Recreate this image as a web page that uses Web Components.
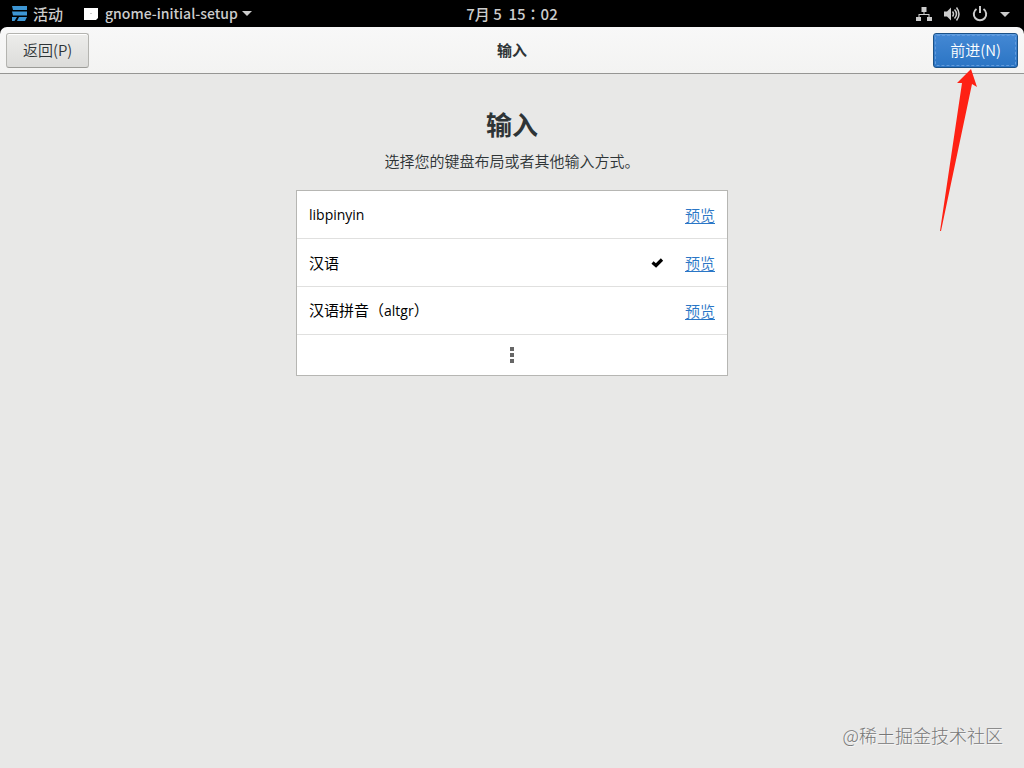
<!DOCTYPE html>
<html lang="zh-CN">
<head>
<meta charset="utf-8">
<title>输入</title>
<style>
  html, body { height: 100%; margin: 0; }
  body {
    background: #000;
    font: 15px/22px "Noto Sans CJK SC", sans-serif;
    color: #2e3436;
  }
</style>
</head>
<body>
<setup-desktop></setup-desktop>

<script>
class BaseElement extends HTMLElement {
  connectedCallback() {
    if (this.shadowRoot) return;
    this.attachShadow({ mode: 'open' }).innerHTML = this.render();
  }
}

class TopBar extends BaseElement {
  render() {
    return `
      <style>
        :host {
          display: grid; grid-template-columns: 1fr auto 1fr; align-items: center;
          height: 27px; box-sizing: border-box;
          background: #000; color: #ccc; font-weight: 500;
        }
        button {
          display: flex; align-items: center; height: 26px; padding: 0; border: 0;
          background: none; color: inherit; font: inherit; white-space: pre;
        }
        .left { display: flex; gap: 20px; padding-left: 11px; }
        .activities { gap: 6px; }
        .app { gap: 6px; height: 24px; font-size: 14px; }
        .app svg:last-child { margin-left: -2px; }
        .clock { font-family: "Noto Sans CJK TC", sans-serif; }
        .status { justify-self: end; gap: 12px; height: 24px; padding-right: 14px; }
        svg { display: block; flex: none; }
      </style>
      <div class="left">
        <button class="activities"><svg width="16" height="16" viewBox="0 0 16 16" fill="#3d96d4"><path d="M1 0h15v4H2zM1 5.500h15v4H2zM1 11h5l-2.500 4H1zM8 11h8l-2 4H6z"/></svg>活动</button>
        <button class="app"><svg width="16" height="16" viewBox="0 0 16 16"><path d="M1 3h14v10l-2 2H1z" fill="#fff"/><path d="M7 8h2v1H7z" fill="#ccc"/></svg><span>gnome-initial-setup</span><svg width="10" height="16" viewBox="0 0 10 16" fill="#ccc"><path d="M0 6h10L5 11z"/></svg></button>
      </div>
      <button class="clock" lang="zh-TW">7月 5  15：02</button>
      <button class="status" aria-label="系统">
        <svg width="16" height="16" viewBox="0 0 16 16" fill="#ccc"><path d="M5.500 1h5v5h-2v2h5v3H16v4h-5v-4h1.500V9h-9v2H5v4H0v-4h2.500V8h5V6h-2z"/></svg>
        <svg width="16" height="16" viewBox="0 0 16 16"><path d="M0 5.500h3L7 1.500v13l-4-4H0z" fill="#ccc"/><g fill="none" stroke="#ccc" stroke-width="1.500"><path d="M8.500 5.500q2 2.500 0 5M10.500 3.500q4 4.500 0 9M12.500 1.500q5 6.500 0 13"/></g></svg>
        <svg width="16" height="16" viewBox="0 0 16 16" fill="none" stroke="#ccc" stroke-width="2"><path d="M4.500 3A6.200 6.200 0 1 0 11.500 3M8 0v7"/></svg>
        <svg width="10" height="16" viewBox="0 0 10 16" fill="#ccc"><path d="M0 6h10L5 11z"/></svg>
      </button>`;
  }
}

class NavButton extends BaseElement {
  render() {
    return `
      <style>
        :host { display: block; font-weight: 350; }
        button {
          display: block; height: 35px; padding: 0 16px; box-sizing: border-box;
          border: 1px solid #b4b4b0; border-bottom-color: #9c9c98; border-radius: 3px;
          background: linear-gradient(#ededeb, #dcdcda);
          box-shadow: inset 0 1px #fff;
          color: #2e3436; font: inherit; line-height: 32px;
        }
        :host([primary]) button {
          position: relative;
          border-color: #1c5187; background: linear-gradient(#4488d4, #2b75c4);
          box-shadow: inset 0 1px #5b9be0; color: #fff;
        }
        :host([primary]) button::after {
          content: ""; position: absolute; inset: 1px;
          border: 1px dashed #629adb; border-radius: 2px;
        }
      </style>
      <button><slot></slot></button>`;
  }
}

class HeaderBar extends BaseElement {
  render() {
    return `
      <style>
        :host {
          display: grid; grid-template-columns: 1fr auto 1fr; align-items: center;
          height: 47px; padding: 0 6px; box-sizing: border-box;
          border-bottom: 1px solid #969694; border-radius: 7px 7px 0 0;
          background: linear-gradient(#f8f8f8, #f3f3f2);
        }
        h2 { margin: 0; font-size: 15px; line-height: 22px; font-weight: 700; }
        slot[name=end] { display: flex; justify-content: flex-end; }
      </style>
      <slot name="start"></slot>
      <h2><slot></slot></h2>
      <slot name="end"></slot>`;
  }
}

class InputRow extends BaseElement {
  render() {
    const check = this.hasAttribute('selected')
      ? '<svg role="img" aria-label="已选择" width="16" height="16" viewBox="0 0 16 16"><path d="M3.500 7.500 7 10.500 13 4.500" fill="none" stroke="#000" stroke-width="3.200"/></svg>'
      : '';
    return `
      <style>
        :host {
          display: flex; align-items: center; gap: 20px;
          height: 48px; padding: 0 12px; box-sizing: border-box;
          border-bottom: 1px solid #e0e0df; color: #000;
        }
        span { flex: 1; }
        ::slotted([lang=en]) { font-family: "Open Sans", sans-serif; font-size: 14px; }
        a { color: #2a76c6; text-underline-offset: 2px; text-decoration-thickness: 1px; font-weight: 350; }
      </style>
      <span><slot></slot></span>${check}<a href="#preview">预览</a>`;
  }
}

class InputList extends BaseElement {
  render() {
    return `
      <style>
        :host {
          display: block; width: 432px; max-width: 100%; box-sizing: border-box;
          border: 1px solid #b6b6b3; background: #fff;
        }
        button {
          display: flex; align-items: center; justify-content: center;
          width: 100%; height: 40px; padding: 0; border: 0; background: none;
        }
      </style>
      <slot></slot>
      <button aria-label="更多"><svg width="16" height="16" viewBox="0 0 16 16" fill="#666"><path d="M6 0h4v4H6zM6 6h4v4H6zM6 12h4v4H6z"/></svg></button>`;
  }
}

class PointerArrow extends BaseElement {
  render() {
    return `
      <style>
        :host { display: block; pointer-events: none; }
        svg { display: block; }
      </style>
      <svg aria-hidden="true" width="40" height="164" viewBox="0 0 40 164"><path d="M32 1 38 19 33 16 2 163H1L23 15 18 15z" fill="#fe2114"/></svg>`;
  }
}

class SetupDesktop extends BaseElement {
  render() {
    return `
      <style>
        :host { display: flex; flex-direction: column; min-height: 100vh; position: relative; }
        main {
          flex: 1; display: flex; flex-direction: column; align-items: center;
          padding: 30px 16px; background: #e8e8e7;
        }
        h1 { margin: 0; font-size: 26px; line-height: 40px; font-weight: 700; }
        p { margin: 6px 0 18px; font-weight: 350; }
        pointer-arrow { position: absolute; top: 68px; right: 45px; }
        .mark {
          position: absolute; right: 21px; bottom: 19px;
          font-size: 18px; line-height: 28px; font-weight: 300; color: #777;
          text-shadow: 1px 1px #f6f6f6;
        }
      </style>
      <top-bar></top-bar>
      <header-bar>
        <nav-button slot="start">返回(P)</nav-button>
        输入
        <nav-button slot="end" primary>前进(N)</nav-button>
      </header-bar>
      <main>
        <h1>输入</h1>
        <p>选择您的键盘布局或者其他输入方式。</p>
        <input-list>
          <input-row><span lang="en">libpinyin</span></input-row>
          <input-row selected>汉语</input-row>
          <input-row>汉语拼音（<span lang="en">altgr</span>）</input-row>
        </input-list>
      </main>
      <pointer-arrow></pointer-arrow>
      <div class="mark">@稀土掘金技术社区</div>`;
  }
}

customElements.define('top-bar', TopBar);
customElements.define('nav-button', NavButton);
customElements.define('header-bar', HeaderBar);
customElements.define('input-row', InputRow);
customElements.define('input-list', InputList);
customElements.define('pointer-arrow', PointerArrow);
customElements.define('setup-desktop', SetupDesktop);
</script>
</body>
</html>
